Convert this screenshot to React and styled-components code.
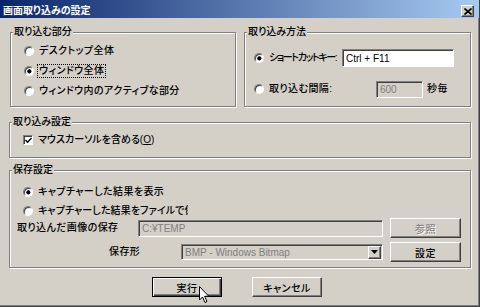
import styled, { createGlobalStyle } from 'styled-components';

const GlobalStyle = createGlobalStyle`
  html, body {
    margin: 0;
    padding: 0;
    background: #d4d0c8;
  }
  body {
    font-family: "Liberation Sans", "Noto Sans CJK JP", sans-serif;
    font-size: 10px;
    font-weight: 500;
    font-feature-settings: "palt";
    color: #000;
  }
`;

const Window = styled.div`
  position: relative;
  width: 480px;
  height: 307px;
  box-sizing: border-box;
  background: #d4d0c8;
  border-right: 1px solid #404040;
  border-bottom: 1px solid #404040;
  box-shadow: inset -1px -1px 0 #808080;
  display: flex;
  flex-direction: column;
  overflow: hidden;
`;

const TitleBar = styled.div`
  height: 18px;
  box-sizing: border-box;
  padding: 4px 5px 0 3px;
  display: flex;
  align-items: center;
  justify-content: space-between;
  background: linear-gradient(to right, #0a246a, #a6caf0);
`;

const Title = styled.span`
  color: #fff;
  font-weight: bold;
  font-size: 10px;
  line-height: 12px;
`;

const CloseButton = styled.div`
  width: 13px;
  height: 12px;
  box-sizing: border-box;
  background: #d4d0c8;
  border: 1px solid;
  border-color: #fff #404040 #404040 #fff;
  box-shadow: inset -1px -1px 0 #808080;
  display: flex;
  align-items: center;
  justify-content: center;
`;

const Body = styled.div`
  padding: 8px 8px 0 9px;
  display: flex;
  flex-direction: column;
`;

const TopRow = styled.div`
  display: grid;
  grid-template-columns: 226px 227px;
  gap: 8px;
  padding-left: 1px;
`;

const GroupBox = styled.fieldset`
  margin: ${p => p.$mt || 0}px 0 0 0;
  padding: 0;
  min-width: 0;
  height: ${p => p.$h}px;
  box-sizing: border-box;
  border: 1px solid #808080;
  box-shadow: inset 1px 1px 0 #fff, 1px 1px 0 #fff;
`;

const Legend = styled.legend`
  margin-left: 2px;
  padding: 0 1px;
  font-size: 10px;
  line-height: 12px;
  background: #d4d0c8;
`;

const GroupBody = styled.div`
  display: flex;
  flex-direction: column;
  gap: ${p => p.$gap || 0}px;
  padding: ${p => p.$pt || 0}px 6px 0 ${p => p.$pl || 13}px;
`;

const Row = styled.div`
  display: flex;
  align-items: center;
  height: ${p => p.$h || 20}px;
  margin-top: ${p => p.$mt || 0}px;
  white-space: nowrap;
`;

const RadioMark = styled.span`
  flex: none;
  width: 10px;
  height: 10px;
  box-sizing: border-box;
  border-radius: 50%;
  border: 1px solid;
  border-color: #808080 #fff #fff #808080;
  box-shadow: inset 1px 1px 0 #404040;
  background: ${p => p.$checked
    ? 'radial-gradient(circle at 55% 55%, #000 0 1.8px, #fff 2.4px)'
    : '#fff'};
  margin-right: 5px;
`;

const CheckMark = styled.span`
  flex: none;
  width: 10px;
  height: 10px;
  box-sizing: border-box;
  border: 1px solid;
  border-color: #808080 #fff #fff #808080;
  box-shadow: inset 1px 1px 0 #404040;
  background: #fff;
  margin-right: 5px;
  display: flex;
  align-items: center;
  justify-content: center;
`;

const Text = styled.span`
  font-size: 10px;
  line-height: 12px;
  letter-spacing: ${p => (p.$ls !== undefined ? p.$ls : 0.4)}px;
  width: ${p => (p.$w ? `${p.$w}px` : 'auto')};
  flex: none;
  overflow: hidden;
  padding-left: ${p => p.$pl || 0}px;
  box-sizing: border-box;
  color: ${p => (p.$disabled ? '#808080' : '#000')};
`;

const Focus = styled.span`
  outline: 1px dotted #000;
  outline-offset: 0;
  padding: 0 1px;
  margin-left: -1px;
  line-height: 12px;
  letter-spacing: 0.4px;
`;

const TextBox = styled.div`
  flex: none;
  width: ${p => p.$w}px;
  height: ${p => p.$h || 18}px;
  box-sizing: border-box;
  border: 1px solid;
  border-color: #808080 #fff #fff #808080;
  box-shadow: inset 1px 1px 0 #404040;
  background: ${p => (p.$disabled ? '#d4d0c8' : '#fff')};
  color: ${p => (p.$disabled ? '#808080' : '#000')};
  padding: 0 3px;
  display: flex;
  align-items: center;
  font-size: 10px;
  font-weight: 400;
  overflow: hidden;
  white-space: nowrap;
`;

const Select = styled(TextBox)`
  justify-content: space-between;
  padding-right: 1px;
`;

const DropButton = styled.span`
  width: 13px;
  height: 13px;
  box-sizing: border-box;
  background: #d4d0c8;
  border: 1px solid;
  border-color: #fff #404040 #404040 #fff;
  box-shadow: inset -1px -1px 0 #808080;
  display: flex;
  align-items: center;
  justify-content: center;
`;

const Button = styled.div`
  flex: none;
  width: ${p => p.$w || 71}px;
  height: 20px;
  margin-left: ${p => p.$ml || 0}px;
  box-sizing: border-box;
  background: #d4d0c8;
  border: 1px solid;
  border-color: ${p => (p.$default ? '#000' : '#fff #404040 #404040 #fff')};
  box-shadow: ${p => (p.$default
    ? 'inset 1px 1px 0 #fff, inset -1px -1px 0 #404040, inset -2px -2px 0 #808080'
    : 'inset -1px -1px 0 #808080')};
  display: flex;
  align-items: center;
  justify-content: center;
  font-size: 10px;
  letter-spacing: 0.4px;
  color: ${p => (p.$disabled ? '#808080' : '#000')};
  text-shadow: ${p => (p.$disabled ? '1px 1px 0 #fff' : 'none')};
`;

const Footer = styled.div`
  display: flex;
  justify-content: center;
  gap: 30px;
  margin-top: 9px;
  padding-right: 6px;
`;

const Cursor = styled.svg`
  position: absolute;
  left: 199px;
  top: 286px;
`;

const Radio = ({ checked, children }) => (
  <>
    <RadioMark $checked={checked} />
    {children}
  </>
);

export default function App() {
  return (
    <>
      <GlobalStyle />
      <Window>
        <TitleBar>
          <Title>画面取り込みの設定</Title>
          <CloseButton>
            <svg width="8" height="7" viewBox="0 0 8 7">
              <path d="M0.5 0.5 L7.5 6.5 M7.5 0.5 L0.5 6.5" stroke="#000" strokeWidth="1.6" />
            </svg>
          </CloseButton>
        </TitleBar>
        <Body>
          <TopRow>
            <GroupBox $h={81}>
              <Legend>取り込む部分</Legend>
              <GroupBody $pt={3}>
                <Row><Radio><Text>デスクトップ全体</Text></Radio></Row>
                <Row><Radio checked><Focus>ウィンドウ全体</Focus></Radio></Row>
                <Row><Radio><Text>ウィンドウ内のアクティブな部分</Text></Radio></Row>
              </GroupBody>
            </GroupBox>
            <GroupBox $h={81}>
              <Legend>取り込み方法</Legend>
              <GroupBody $pt={10} $pl={9} $gap={11}>
                <Row>
                  <Radio checked><Text $w={73} $ls={-1.4}>ショートカットキー:</Text></Radio>
                  <TextBox $w={112}>Ctrl + F11</TextBox>
                </Row>
                <Row>
                  <Radio><Text $w={107}>取り込む間隔:</Text></Radio>
                  <TextBox $w={47} $h={17} $disabled>600</TextBox>
                  <Text $pl={4}>秒毎</Text>
                </Row>
              </GroupBody>
            </GroupBox>
          </TopRow>

          <GroupBox $h={42} $mt={9}>
            <Legend>取り込み設定</Legend>
            <GroupBody $pt={2}>
              <Row>
                <CheckMark>
                  <svg width="7" height="7" viewBox="0 0 7 7">
                    <path d="M0.5 3 L2.5 5.2 L6.5 1" fill="none" stroke="#000" strokeWidth="1.4" />
                  </svg>
                </CheckMark>
                <Text $ls={0}>マウスカーソルを含める(<u>O</u>)</Text>
              </Row>
            </GroupBody>
          </GroupBox>

          <GroupBox $h={104} $mt={6}>
            <Legend>保存設定</Legend>
            <GroupBody $pt={7} $gap={2}>
              <Row $h={17}><Radio checked><Text>キャプチャーした結果を表示</Text></Radio></Row>
              <Row $h={17}><Radio><Text $w={150} $ls={0.1}>キャプチャーした結果をファイルで保存</Text></Radio></Row>
            </GroupBody>
            <GroupBody $pl={7} $gap={4}>
              <Row $mt={-1}>
                <Text $w={121}>取り込んだ画像の保存</Text>
                <TextBox $w={245} $h={17} $disabled>C:¥TEMP</TextBox>
                <Button $ml={7} $disabled>参照</Button>
              </Row>
              <Row>
                <Text $w={164} $pl={92}>保存形</Text>
                <Select $w={202} $h={16} $disabled>
                  BMP - Windows Bitmap
                  <DropButton>
                    <svg width="7" height="4" viewBox="0 0 7 4">
                      <path d="M0 0 H7 L3.5 4 Z" fill="#000" />
                    </svg>
                  </DropButton>
                </Select>
                <Button $ml={7}>設定</Button>
              </Row>
            </GroupBody>
          </GroupBox>

          <Footer>
            <Button $w={70} $default>実行</Button>
            <Button $w={70}>キャンセル</Button>
          </Footer>
        </Body>
        <Cursor width="11" height="18" viewBox="0 0 11 18">
          <path d="M0.5 0.5 V14 L3.5 11 L6 16.5 L8 15.5 L5.6 10.3 H9.8 Z" fill="#fff" stroke="#000" strokeWidth="1" />
        </Cursor>
      </Window>
    </>
  );
}
